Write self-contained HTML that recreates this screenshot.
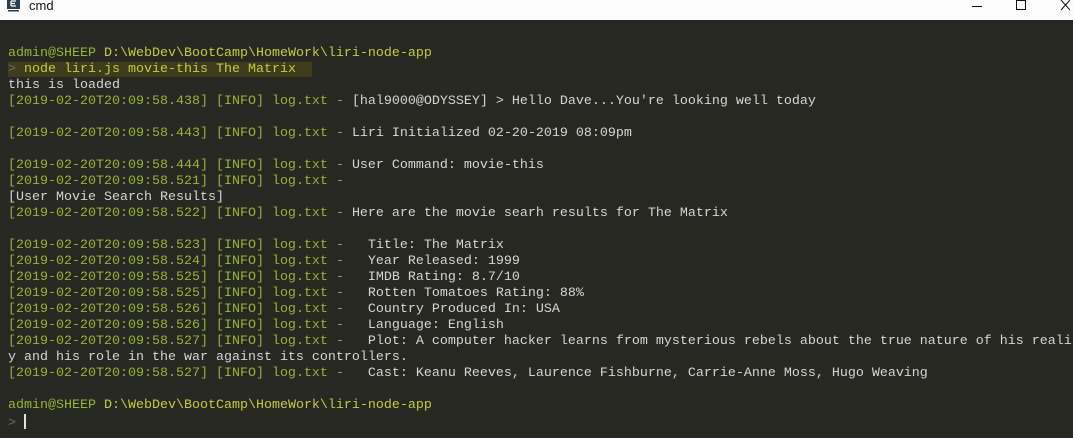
<!DOCTYPE html>
<html><head><meta charset="utf-8">
<style>
html,body{margin:0;padding:0;width:1073px;height:438px;overflow:hidden;background:#272822}
#tb{position:absolute;left:0;top:0;width:1073px;height:20px;background:#fbfbfb}
#tb .t{position:absolute;left:29px;top:-2px;font:13px "Liberation Sans",sans-serif;color:#111;line-height:16px}
#term{position:absolute;left:8px;top:46px;font-family:"Liberation Mono",monospace;font-size:13.33px;line-height:16px;color:#d6d6d6;white-space:pre}
.g{color:#97b43c}
.p{color:#6f7060}
.y{color:#c6cc44}
.hl{background:#3d3c1c}
</style></head><body>
<div id="tb">
<svg style="position:absolute;left:7px;top:-2px" width="14" height="14" viewBox="0 0 14 14"><rect x="0" y="0" width="13" height="11" fill="#2a3f52"/><path d="M4 3h5M4 5.5h4M4 8h5M4 3v5" stroke="#fff" stroke-width="1.2" fill="none"/><rect x="1" y="12" width="11" height="1.5" fill="#2a3f52"/></svg>
<div class="t">cmd</div>
<svg style="position:absolute;left:970px;top:0" width="100" height="12" viewBox="0 0 100 12"><path d="M2 6.5h10" stroke="#111"/><rect x="46.5" y="0.5" width="9" height="9" fill="none" stroke="#111"/><path d="M91 0l9 10M100 0l-9 10" stroke="#111"/></svg>
</div>
<div id="term"><span class="g">admin@SHEEP</span> <span class="y">D:\WebDev\BootCamp\HomeWork\liri-node-app</span>
<span class="hl"><span class="p">&gt;</span> <span class="y">node liri.js movie-this The Matrix</span>  </span>
this is loaded
<span class="g">[2019-02-20T20:09:58.438] [INFO] log.txt - </span>[hal9000@ODYSSEY] &gt; Hello Dave...You're looking well today

<span class="g">[2019-02-20T20:09:58.443] [INFO] log.txt - </span>Liri Initialized 02-20-2019 08:09pm

<span class="g">[2019-02-20T20:09:58.444] [INFO] log.txt - </span>User Command: movie-this
<span class="g">[2019-02-20T20:09:58.521] [INFO] log.txt - </span>
[User Movie Search Results]
<span class="g">[2019-02-20T20:09:58.522] [INFO] log.txt - </span>Here are the movie searh results for The Matrix

<span class="g">[2019-02-20T20:09:58.523] [INFO] log.txt - </span>  Title: The Matrix
<span class="g">[2019-02-20T20:09:58.524] [INFO] log.txt - </span>  Year Released: 1999
<span class="g">[2019-02-20T20:09:58.525] [INFO] log.txt - </span>  IMDB Rating: 8.7/10
<span class="g">[2019-02-20T20:09:58.525] [INFO] log.txt - </span>  Rotten Tomatoes Rating: 88%
<span class="g">[2019-02-20T20:09:58.526] [INFO] log.txt - </span>  Country Produced In: USA
<span class="g">[2019-02-20T20:09:58.526] [INFO] log.txt - </span>  Language: English
<span class="g">[2019-02-20T20:09:58.527] [INFO] log.txt - </span>  Plot: A computer hacker learns from mysterious rebels about the true nature of his reali
y and his role in the war against its controllers.
<span class="g">[2019-02-20T20:09:58.527] [INFO] log.txt - </span>  Cast: Keanu Reeves, Laurence Fishburne, Carrie-Anne Moss, Hugo Weaving

<span class="g">admin@SHEEP</span> <span class="y">D:\WebDev\BootCamp\HomeWork\liri-node-app</span>
<span class="p">&gt;</span> <span style="display:inline-block;width:2px;height:15px;background:#e0e0e0;vertical-align:-3px"></span></div>
</body></html>
